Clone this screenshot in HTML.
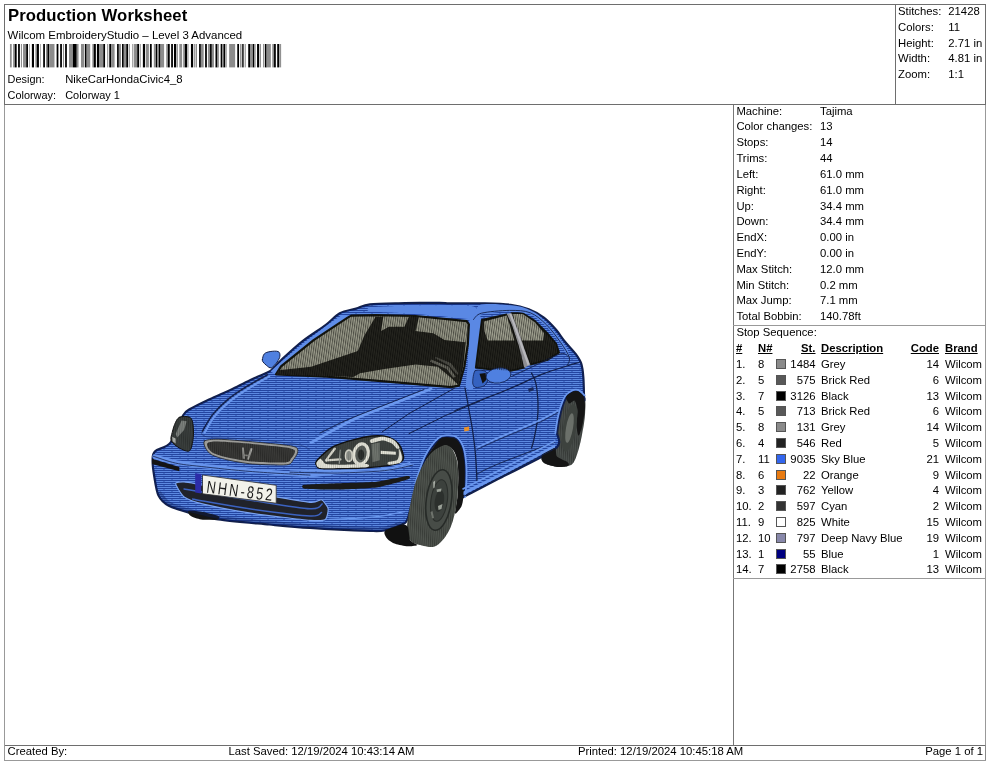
<!DOCTYPE html>
<html><head><meta charset="utf-8"><title>Production Worksheet</title>
<style>
html,body{margin:0;padding:0;background:#fff;}
body{width:990px;height:762px;position:relative;overflow:hidden;font-family:"Liberation Sans",sans-serif;color:#000;}
.t{position:absolute;white-space:nowrap;line-height:1;}
#tx{position:absolute;left:0;top:0;width:990px;height:762px;will-change:transform;}
.l{position:absolute;background:#6e6e6e;}
.sw{position:absolute;width:10px;height:10px;box-sizing:border-box;}
u{text-decoration:underline;text-decoration-thickness:1px;text-underline-offset:1px;}
</style></head><body>

<div class="l" style="left:4px;top:4px;width:982px;height:1px;background:#6e6e6e"></div>
<div class="l" style="left:4px;top:4px;width:1px;height:100px;background:#6e6e6e"></div>
<div class="l" style="left:895px;top:4px;width:1px;height:100px;background:#6e6e6e"></div>
<div class="l" style="left:985px;top:4px;width:1px;height:100px;background:#6e6e6e"></div>
<div class="l" style="left:4px;top:104px;width:982px;height:1px;background:#6e6e6e"></div>
<div class="l" style="left:4px;top:105px;width:1px;height:640px;background:#999"></div>
<div class="l" style="left:733px;top:105px;width:1px;height:640px;background:#777"></div>
<div class="l" style="left:985px;top:105px;width:1px;height:640px;background:#999"></div>
<div class="l" style="left:733px;top:325px;width:253px;height:1px;background:#999"></div>
<div class="l" style="left:733px;top:578px;width:253px;height:1px;background:#999"></div>
<div class="l" style="left:4px;top:745px;width:982px;height:1px;background:#6e6e6e"></div>
<div class="l" style="left:4px;top:760px;width:982px;height:1px;background:#999"></div>
<div class="l" style="left:4px;top:745px;width:1px;height:15px;background:#999"></div>
<div class="l" style="left:985px;top:745px;width:1px;height:15px;background:#888"></div>
<div id="tx">
<span class="t" style="left:8px;top:8.06px;font-size:16.7px;font-weight:bold;letter-spacing:0.08px;">Production Worksheet</span>
<span class="t" style="left:7.6px;top:29.61px;font-size:11.45px;">Wilcom EmbroideryStudio – Level 3 Advanced</span>
<span class="t" style="left:7.6px;top:74.17px;font-size:10.9px;">Design:</span>
<span class="t" style="left:65.2px;top:74.23px;font-size:11.3px;">NikeCarHondaCivic4_8</span>
<span class="t" style="left:7.6px;top:90.47px;font-size:10.9px;">Colorway:</span>
<span class="t" style="left:65.2px;top:90.43px;font-size:10.95px;">Colorway 1</span>
<svg style="position:absolute;left:0;top:44.2px" width="290" height="24" viewBox="0 0 290 24" shape-rendering="auto"><rect x="9.95" y="0" width="1.77" height="23.4" fill="#8c8c8c"/><rect x="13.13" y="0" width="1.77" height="23.4" fill="#8c8c8c"/><rect x="14.90" y="0" width="1.77" height="23.4" fill="#000"/><rect x="18.08" y="0" width="1.77" height="23.4" fill="#000"/><rect x="20.91" y="0" width="1.06" height="23.4" fill="#8c8c8c"/><rect x="23.03" y="0" width="3.18" height="23.4" fill="#8c8c8c"/><rect x="26.21" y="0" width="1.77" height="23.4" fill="#000"/><rect x="29.04" y="0" width="0.71" height="23.4" fill="#8c8c8c"/><rect x="31.87" y="0" width="2.12" height="23.4" fill="#000"/><rect x="35.40" y="0" width="1.41" height="23.4" fill="#8c8c8c"/><rect x="36.82" y="0" width="2.12" height="23.4" fill="#000"/><rect x="40.00" y="0" width="0.71" height="23.4" fill="#8c8c8c"/><rect x="43.18" y="0" width="1.77" height="23.4" fill="#000"/><rect x="46.01" y="0" width="1.41" height="23.4" fill="#8c8c8c"/><rect x="47.42" y="0" width="1.77" height="23.4" fill="#000"/><rect x="49.19" y="0" width="5.30" height="23.4" fill="#8c8c8c"/><rect x="56.62" y="0" width="1.77" height="23.4" fill="#000"/><rect x="60.15" y="0" width="1.77" height="23.4" fill="#000"/><rect x="62.98" y="0" width="1.06" height="23.4" fill="#8c8c8c"/><rect x="65.10" y="0" width="1.77" height="23.4" fill="#000"/><rect x="68.99" y="0" width="3.89" height="23.4" fill="#8c8c8c"/><rect x="72.88" y="0" width="2.12" height="23.4" fill="#000"/><rect x="75.00" y="0" width="1.77" height="23.4" fill="#000"/><rect x="76.77" y="0" width="1.77" height="23.4" fill="#8c8c8c"/><rect x="81.01" y="0" width="3.18" height="23.4" fill="#8c8c8c"/><rect x="84.90" y="0" width="1.77" height="23.4" fill="#000"/><rect x="86.67" y="0" width="3.54" height="23.4" fill="#8c8c8c"/><rect x="92.32" y="0" width="1.41" height="23.4" fill="#8c8c8c"/><rect x="93.74" y="0" width="2.12" height="23.4" fill="#000"/><rect x="96.92" y="0" width="2.12" height="23.4" fill="#000"/><rect x="99.04" y="0" width="4.24" height="23.4" fill="#8c8c8c"/><rect x="103.28" y="0" width="1.77" height="23.4" fill="#000"/><rect x="107.17" y="0" width="1.06" height="23.4" fill="#8c8c8c"/><rect x="109.29" y="0" width="1.77" height="23.4" fill="#000"/><rect x="111.06" y="0" width="3.54" height="23.4" fill="#8c8c8c"/><rect x="117.07" y="0" width="1.77" height="23.4" fill="#000"/><rect x="118.84" y="0" width="2.12" height="23.4" fill="#8c8c8c"/><rect x="122.02" y="0" width="1.77" height="23.4" fill="#000"/><rect x="123.79" y="0" width="2.47" height="23.4" fill="#8c8c8c"/><rect x="126.26" y="0" width="1.77" height="23.4" fill="#000"/><rect x="128.74" y="0" width="1.06" height="23.4" fill="#8c8c8c"/><rect x="132.27" y="0" width="1.06" height="23.4" fill="#8c8c8c"/><rect x="134.04" y="0" width="3.18" height="23.4" fill="#8c8c8c"/><rect x="137.22" y="0" width="1.77" height="23.4" fill="#000"/><rect x="139.70" y="0" width="1.06" height="23.4" fill="#8c8c8c"/><rect x="142.88" y="0" width="2.12" height="23.4" fill="#000"/><rect x="145.71" y="0" width="3.18" height="23.4" fill="#8c8c8c"/><rect x="149.95" y="0" width="1.77" height="23.4" fill="#000"/><rect x="153.84" y="0" width="2.12" height="23.4" fill="#8c8c8c"/><rect x="155.96" y="0" width="1.41" height="23.4" fill="#000"/><rect x="157.37" y="0" width="1.41" height="23.4" fill="#8c8c8c"/><rect x="158.79" y="0" width="1.77" height="23.4" fill="#000"/><rect x="160.56" y="0" width="3.54" height="23.4" fill="#8c8c8c"/><rect x="166.21" y="0" width="1.77" height="23.4" fill="#8c8c8c"/><rect x="167.98" y="0" width="1.77" height="23.4" fill="#000"/><rect x="171.16" y="0" width="1.77" height="23.4" fill="#000"/><rect x="173.99" y="0" width="2.12" height="23.4" fill="#000"/><rect x="176.46" y="0" width="1.41" height="23.4" fill="#8c8c8c"/><rect x="179.29" y="0" width="2.83" height="23.4" fill="#8c8c8c"/><rect x="183.18" y="0" width="1.77" height="23.4" fill="#8c8c8c"/><rect x="184.95" y="0" width="2.12" height="23.4" fill="#000"/><rect x="187.42" y="0" width="1.06" height="23.4" fill="#8c8c8c"/><rect x="190.96" y="0" width="2.12" height="23.4" fill="#000"/><rect x="193.79" y="0" width="1.06" height="23.4" fill="#8c8c8c"/><rect x="195.56" y="0" width="1.41" height="23.4" fill="#8c8c8c"/><rect x="199.09" y="0" width="1.77" height="23.4" fill="#000"/><rect x="200.86" y="0" width="2.83" height="23.4" fill="#8c8c8c"/><rect x="205.10" y="0" width="1.77" height="23.4" fill="#000"/><rect x="207.93" y="0" width="2.12" height="23.4" fill="#8c8c8c"/><rect x="210.05" y="0" width="1.77" height="23.4" fill="#000"/><rect x="211.82" y="0" width="2.12" height="23.4" fill="#8c8c8c"/><rect x="215.00" y="0" width="0.71" height="23.4" fill="#8c8c8c"/><rect x="215.71" y="0" width="1.77" height="23.4" fill="#000"/><rect x="217.47" y="0" width="1.41" height="23.4" fill="#8c8c8c"/><rect x="220.66" y="0" width="1.41" height="23.4" fill="#000"/><rect x="222.07" y="0" width="1.41" height="23.4" fill="#8c8c8c"/><rect x="223.48" y="0" width="1.77" height="23.4" fill="#000"/><rect x="225.61" y="0" width="1.06" height="23.4" fill="#8c8c8c"/><rect x="229.14" y="0" width="6.01" height="23.4" fill="#8c8c8c"/><rect x="237.27" y="0" width="1.77" height="23.4" fill="#000"/><rect x="240.10" y="0" width="1.41" height="23.4" fill="#8c8c8c"/><rect x="242.22" y="0" width="1.41" height="23.4" fill="#000"/><rect x="244.70" y="0" width="1.06" height="23.4" fill="#8c8c8c"/><rect x="248.23" y="0" width="1.77" height="23.4" fill="#000"/><rect x="250.00" y="0" width="2.83" height="23.4" fill="#8c8c8c"/><rect x="252.83" y="0" width="1.41" height="23.4" fill="#000"/><rect x="254.24" y="0" width="1.41" height="23.4" fill="#8c8c8c"/><rect x="257.07" y="0" width="2.12" height="23.4" fill="#000"/><rect x="259.90" y="0" width="1.06" height="23.4" fill="#8c8c8c"/><rect x="263.08" y="0" width="1.06" height="23.4" fill="#8c8c8c"/><rect x="264.85" y="0" width="1.77" height="23.4" fill="#000"/><rect x="266.62" y="0" width="4.24" height="23.4" fill="#8c8c8c"/><rect x="272.27" y="0" width="1.77" height="23.4" fill="#8c8c8c"/><rect x="274.04" y="0" width="1.77" height="23.4" fill="#000"/><rect x="277.22" y="0" width="2.12" height="23.4" fill="#000"/><rect x="280.05" y="0" width="1.06" height="23.4" fill="#8c8c8c"/></svg>
<span class="t" style="left:898px;top:5.83px;font-size:11.3px;">Stitches:</span>
<span class="t" style="left:948.3px;top:5.83px;font-size:11.3px;">21428</span>
<span class="t" style="left:898px;top:21.68px;font-size:11.3px;">Colors:</span>
<span class="t" style="left:948.3px;top:21.68px;font-size:11.3px;">11</span>
<span class="t" style="left:898px;top:37.53px;font-size:11.3px;">Height:</span>
<span class="t" style="left:948.3px;top:37.53px;font-size:11.3px;">2.71 in</span>
<span class="t" style="left:898px;top:53.38px;font-size:11.3px;">Width:</span>
<span class="t" style="left:948.3px;top:53.38px;font-size:11.3px;">4.81 in</span>
<span class="t" style="left:898px;top:69.23px;font-size:11.3px;">Zoom:</span>
<span class="t" style="left:948.3px;top:69.23px;font-size:11.3px;">1:1</span>
<span class="t" style="left:736.4px;top:105.63px;font-size:11.3px;">Machine:</span>
<span class="t" style="left:820px;top:105.63px;font-size:11.3px;">Tajima</span>
<span class="t" style="left:736.4px;top:121.45px;font-size:11.3px;">Color changes:</span>
<span class="t" style="left:820px;top:121.45px;font-size:11.3px;">13</span>
<span class="t" style="left:736.4px;top:137.27px;font-size:11.3px;">Stops:</span>
<span class="t" style="left:820px;top:137.27px;font-size:11.3px;">14</span>
<span class="t" style="left:736.4px;top:153.09px;font-size:11.3px;">Trims:</span>
<span class="t" style="left:820px;top:153.09px;font-size:11.3px;">44</span>
<span class="t" style="left:736.4px;top:168.91px;font-size:11.3px;">Left:</span>
<span class="t" style="left:820px;top:168.91px;font-size:11.3px;">61.0 mm</span>
<span class="t" style="left:736.4px;top:184.73px;font-size:11.3px;">Right:</span>
<span class="t" style="left:820px;top:184.73px;font-size:11.3px;">61.0 mm</span>
<span class="t" style="left:736.4px;top:200.55px;font-size:11.3px;">Up:</span>
<span class="t" style="left:820px;top:200.55px;font-size:11.3px;">34.4 mm</span>
<span class="t" style="left:736.4px;top:216.37px;font-size:11.3px;">Down:</span>
<span class="t" style="left:820px;top:216.37px;font-size:11.3px;">34.4 mm</span>
<span class="t" style="left:736.4px;top:232.19px;font-size:11.3px;">EndX:</span>
<span class="t" style="left:820px;top:232.19px;font-size:11.3px;">0.00 in</span>
<span class="t" style="left:736.4px;top:248.01px;font-size:11.3px;">EndY:</span>
<span class="t" style="left:820px;top:248.01px;font-size:11.3px;">0.00 in</span>
<span class="t" style="left:736.4px;top:263.83px;font-size:11.3px;">Max Stitch:</span>
<span class="t" style="left:820px;top:263.83px;font-size:11.3px;">12.0 mm</span>
<span class="t" style="left:736.4px;top:279.65px;font-size:11.3px;">Min Stitch:</span>
<span class="t" style="left:820px;top:279.65px;font-size:11.3px;">0.2 mm</span>
<span class="t" style="left:736.4px;top:295.47px;font-size:11.3px;">Max Jump:</span>
<span class="t" style="left:820px;top:295.47px;font-size:11.3px;">7.1 mm</span>
<span class="t" style="left:736.4px;top:311.29px;font-size:11.3px;">Total Bobbin:</span>
<span class="t" style="left:820px;top:311.29px;font-size:11.3px;">140.78ft</span>
<span class="t" style="left:736.4px;top:327.33px;font-size:11.3px;">Stop Sequence:</span>
<span class="t" style="left:736px;top:343.43px;font-size:11.3px;font-weight:bold;"><u>#</u></span>
<span class="t" style="left:758px;top:343.43px;font-size:11.3px;font-weight:bold;"><u>N#</u></span>
<span class="t" style="right:174.5px;top:343.43px;font-size:11.3px;font-weight:bold;"><u>St.</u></span>
<span class="t" style="left:821px;top:343.43px;font-size:11.3px;font-weight:bold;"><u>Description</u></span>
<span class="t" style="right:51px;top:343.43px;font-size:11.3px;font-weight:bold;"><u>Code</u></span>
<span class="t" style="left:945px;top:343.43px;font-size:11.3px;font-weight:bold;"><u>Brand</u></span>
<span class="t" style="left:736px;top:359.03px;font-size:11.3px;">1.</span>
<span class="t" style="left:758px;top:359.03px;font-size:11.3px;">8</span>
<div class="sw" style="left:776px;top:358.90px;background:#8a8a8a;border:1px solid #555"></div>
<span class="t" style="right:174.5px;top:359.03px;font-size:11.3px;">1484</span>
<span class="t" style="left:821px;top:359.03px;font-size:11.3px;">Grey</span>
<span class="t" style="right:51px;top:359.03px;font-size:11.3px;">14</span>
<span class="t" style="left:945px;top:359.03px;font-size:11.3px;">Wilcom</span>
<span class="t" style="left:736px;top:374.83px;font-size:11.3px;">2.</span>
<span class="t" style="left:758px;top:374.83px;font-size:11.3px;">5</span>
<div class="sw" style="left:776px;top:374.70px;background:#585858;border:1px solid #555"></div>
<span class="t" style="right:174.5px;top:374.83px;font-size:11.3px;">575</span>
<span class="t" style="left:821px;top:374.83px;font-size:11.3px;">Brick Red</span>
<span class="t" style="right:51px;top:374.83px;font-size:11.3px;">6</span>
<span class="t" style="left:945px;top:374.83px;font-size:11.3px;">Wilcom</span>
<span class="t" style="left:736px;top:390.63px;font-size:11.3px;">3.</span>
<span class="t" style="left:758px;top:390.63px;font-size:11.3px;">7</span>
<div class="sw" style="left:776px;top:390.50px;background:#000;border:1px solid #555"></div>
<span class="t" style="right:174.5px;top:390.63px;font-size:11.3px;">3126</span>
<span class="t" style="left:821px;top:390.63px;font-size:11.3px;">Black</span>
<span class="t" style="right:51px;top:390.63px;font-size:11.3px;">13</span>
<span class="t" style="left:945px;top:390.63px;font-size:11.3px;">Wilcom</span>
<span class="t" style="left:736px;top:406.43px;font-size:11.3px;">4.</span>
<span class="t" style="left:758px;top:406.43px;font-size:11.3px;">5</span>
<div class="sw" style="left:776px;top:406.30px;background:#585858;border:1px solid #555"></div>
<span class="t" style="right:174.5px;top:406.43px;font-size:11.3px;">713</span>
<span class="t" style="left:821px;top:406.43px;font-size:11.3px;">Brick Red</span>
<span class="t" style="right:51px;top:406.43px;font-size:11.3px;">6</span>
<span class="t" style="left:945px;top:406.43px;font-size:11.3px;">Wilcom</span>
<span class="t" style="left:736px;top:422.23px;font-size:11.3px;">5.</span>
<span class="t" style="left:758px;top:422.23px;font-size:11.3px;">8</span>
<div class="sw" style="left:776px;top:422.10px;background:#8a8a8a;border:1px solid #555"></div>
<span class="t" style="right:174.5px;top:422.23px;font-size:11.3px;">131</span>
<span class="t" style="left:821px;top:422.23px;font-size:11.3px;">Grey</span>
<span class="t" style="right:51px;top:422.23px;font-size:11.3px;">14</span>
<span class="t" style="left:945px;top:422.23px;font-size:11.3px;">Wilcom</span>
<span class="t" style="left:736px;top:438.03px;font-size:11.3px;">6.</span>
<span class="t" style="left:758px;top:438.03px;font-size:11.3px;">4</span>
<div class="sw" style="left:776px;top:437.90px;background:#222;border:1px solid #555"></div>
<span class="t" style="right:174.5px;top:438.03px;font-size:11.3px;">546</span>
<span class="t" style="left:821px;top:438.03px;font-size:11.3px;">Red</span>
<span class="t" style="right:51px;top:438.03px;font-size:11.3px;">5</span>
<span class="t" style="left:945px;top:438.03px;font-size:11.3px;">Wilcom</span>
<span class="t" style="left:736px;top:453.83px;font-size:11.3px;">7.</span>
<span class="t" style="left:758px;top:453.83px;font-size:11.3px;">11</span>
<div class="sw" style="left:776px;top:453.70px;background:#3366ee;border:1px solid #555"></div>
<span class="t" style="right:174.5px;top:453.83px;font-size:11.3px;">9035</span>
<span class="t" style="left:821px;top:453.83px;font-size:11.3px;">Sky Blue</span>
<span class="t" style="right:51px;top:453.83px;font-size:11.3px;">21</span>
<span class="t" style="left:945px;top:453.83px;font-size:11.3px;">Wilcom</span>
<span class="t" style="left:736px;top:469.63px;font-size:11.3px;">8.</span>
<span class="t" style="left:758px;top:469.63px;font-size:11.3px;">6</span>
<div class="sw" style="left:776px;top:469.50px;background:#e87a10;border:1px solid #555"></div>
<span class="t" style="right:174.5px;top:469.63px;font-size:11.3px;">22</span>
<span class="t" style="left:821px;top:469.63px;font-size:11.3px;">Orange</span>
<span class="t" style="right:51px;top:469.63px;font-size:11.3px;">9</span>
<span class="t" style="left:945px;top:469.63px;font-size:11.3px;">Wilcom</span>
<span class="t" style="left:736px;top:485.43px;font-size:11.3px;">9.</span>
<span class="t" style="left:758px;top:485.43px;font-size:11.3px;">3</span>
<div class="sw" style="left:776px;top:485.30px;background:#222;border:1px solid #555"></div>
<span class="t" style="right:174.5px;top:485.43px;font-size:11.3px;">762</span>
<span class="t" style="left:821px;top:485.43px;font-size:11.3px;">Yellow</span>
<span class="t" style="right:51px;top:485.43px;font-size:11.3px;">4</span>
<span class="t" style="left:945px;top:485.43px;font-size:11.3px;">Wilcom</span>
<span class="t" style="left:736px;top:501.23px;font-size:11.3px;">10.</span>
<span class="t" style="left:758px;top:501.23px;font-size:11.3px;">2</span>
<div class="sw" style="left:776px;top:501.10px;background:#333;border:1px solid #555"></div>
<span class="t" style="right:174.5px;top:501.23px;font-size:11.3px;">597</span>
<span class="t" style="left:821px;top:501.23px;font-size:11.3px;">Cyan</span>
<span class="t" style="right:51px;top:501.23px;font-size:11.3px;">2</span>
<span class="t" style="left:945px;top:501.23px;font-size:11.3px;">Wilcom</span>
<span class="t" style="left:736px;top:517.03px;font-size:11.3px;">11.</span>
<span class="t" style="left:758px;top:517.03px;font-size:11.3px;">9</span>
<div class="sw" style="left:776px;top:516.90px;background:#fff;border:1px solid #555"></div>
<span class="t" style="right:174.5px;top:517.03px;font-size:11.3px;">825</span>
<span class="t" style="left:821px;top:517.03px;font-size:11.3px;">White</span>
<span class="t" style="right:51px;top:517.03px;font-size:11.3px;">15</span>
<span class="t" style="left:945px;top:517.03px;font-size:11.3px;">Wilcom</span>
<span class="t" style="left:736px;top:532.83px;font-size:11.3px;">12.</span>
<span class="t" style="left:758px;top:532.83px;font-size:11.3px;">10</span>
<div class="sw" style="left:776px;top:532.70px;background:#8888aa;border:1px solid #555"></div>
<span class="t" style="right:174.5px;top:532.83px;font-size:11.3px;">797</span>
<span class="t" style="left:821px;top:532.83px;font-size:11.3px;">Deep Navy Blue</span>
<span class="t" style="right:51px;top:532.83px;font-size:11.3px;">19</span>
<span class="t" style="left:945px;top:532.83px;font-size:11.3px;">Wilcom</span>
<span class="t" style="left:736px;top:548.63px;font-size:11.3px;">13.</span>
<span class="t" style="left:758px;top:548.63px;font-size:11.3px;">1</span>
<div class="sw" style="left:776px;top:548.50px;background:#000080;border:1px solid #555"></div>
<span class="t" style="right:174.5px;top:548.63px;font-size:11.3px;">55</span>
<span class="t" style="left:821px;top:548.63px;font-size:11.3px;">Blue</span>
<span class="t" style="right:51px;top:548.63px;font-size:11.3px;">1</span>
<span class="t" style="left:945px;top:548.63px;font-size:11.3px;">Wilcom</span>
<span class="t" style="left:736px;top:564.43px;font-size:11.3px;">14.</span>
<span class="t" style="left:758px;top:564.43px;font-size:11.3px;">7</span>
<div class="sw" style="left:776px;top:564.30px;background:#000;border:1px solid #555"></div>
<span class="t" style="right:174.5px;top:564.43px;font-size:11.3px;">2758</span>
<span class="t" style="left:821px;top:564.43px;font-size:11.3px;">Black</span>
<span class="t" style="right:51px;top:564.43px;font-size:11.3px;">13</span>
<span class="t" style="left:945px;top:564.43px;font-size:11.3px;">Wilcom</span>
<span class="t" style="left:7.6px;top:745.93px;font-size:11.3px;">Created By:</span>
<span class="t" style="left:228.5px;top:745.93px;font-size:11.3px;">Last Saved: 12/19/2024 10:43:14 AM</span>
<span class="t" style="left:578px;top:745.93px;font-size:11.3px;">Printed: 12/19/2024 10:45:18 AM</span>
<span class="t" style="right:7px;top:745.93px;font-size:11.3px;">Page 1 of 1</span>
</div>
<svg style="position:absolute;left:0;top:0" width="990" height="762" viewBox="0 0 990 762">
<defs>
<pattern id="hs" width="16" height="4" patternUnits="userSpaceOnUse">
<rect x="0" y="0" width="16" height="1" fill="#001a78" opacity="0.61"/>
<rect x="0" y="2" width="16" height="1" fill="#001a78" opacity="0.61"/>
<rect x="3" y="1" width="2" height="1" fill="#001a78" opacity="0.25"/>
<rect x="11" y="3" width="2" height="1" fill="#001a78" opacity="0.25"/>
</pattern>
<pattern id="vs" width="2.2" height="40" patternUnits="userSpaceOnUse" patternTransform="rotate(8)">
<rect x="0" y="0" width="1.0" height="40" fill="#000" opacity="0.50"/>
</pattern>
<pattern id="vt" width="2.1" height="40" patternUnits="userSpaceOnUse" patternTransform="rotate(3)">
<rect x="0" y="0" width="0.9" height="40" fill="#000" opacity="0.28"/>
</pattern>
<clipPath id="cb"><path d="M339.8,313.2 C335.3,315.7 331.4,320.7 325.9,324.9 C320.3,329.0 308.9,336.2 302.6,341.1 C296.4,346.0 288.6,353.2 284.1,357.4 C279.5,361.6 274.7,366.8 272.4,369.0 C270.2,371.2 272.1,370.2 268.9,371.8 C265.8,373.4 256.9,376.9 251.5,379.5 C246.1,382.0 239.2,385.8 232.9,388.7 C226.7,391.7 216.0,396.2 209.7,399.2 C203.4,402.2 195.1,406.1 191.1,408.5 C187.1,410.9 186.1,410.3 183.0,415.5 C179.9,420.6 174.6,437.3 170.5,442.6 C166.3,448.0 157.8,448.6 155.1,451.2 C152.4,453.7 152.7,455.9 152.6,459.7 C152.4,463.5 153.4,471.4 154.3,476.8 C155.2,482.1 156.4,491.2 158.5,495.5 C160.7,499.9 164.2,503.2 168.8,505.8 C173.4,508.3 181.8,510.5 189.2,512.6 C196.7,514.6 206.2,517.6 218.2,519.4 C230.3,521.2 255.6,523.2 269.4,524.5 C283.2,525.8 294.9,527.0 310.0,527.9 C325.1,528.9 358.8,530.5 370.0,530.9 C381.2,531.2 380.2,531.3 385.0,530.4 C389.7,529.4 398.1,526.4 401.5,524.6 C404.9,522.7 405.5,524.6 407.8,518.3 C410.2,511.9 414.4,491.2 417.3,482.0 C420.1,472.8 423.4,463.2 426.7,456.8 C430.0,450.4 436.0,442.4 439.3,439.5 C442.7,436.5 446.2,437.1 448.8,437.1 C451.4,437.1 454.7,437.7 456.7,439.5 C458.7,441.2 461.0,445.1 462.2,448.9 C463.4,452.7 464.2,459.5 464.6,464.7 C464.9,469.9 464.8,478.9 464.6,483.6 C464.4,488.3 463.5,494.2 463.3,496.2 C463.1,498.2 458.0,499.7 463.5,497.0 C469.0,494.3 486.3,485.2 500.0,478.0 C513.7,470.8 546.5,455.9 555.0,449.0 C563.5,442.1 556.4,436.5 557.0,432.0 C557.6,427.6 558.4,422.7 559.2,419.1 C559.9,415.4 561.0,410.8 562.0,407.5 C563.1,404.3 564.9,399.7 566.4,397.4 C567.9,395.1 570.4,393.2 572.2,392.4 C573.9,391.5 576.1,390.9 577.9,391.6 C579.7,392.4 583.2,396.2 584.1,397.4 C585.1,398.6 584.2,402.6 584.1,399.5 C584.0,396.5 583.8,382.3 583.3,376.8 C582.9,371.4 582.2,366.6 581.1,363.2 C579.9,359.8 578.1,357.3 575.8,354.1 C573.4,350.9 568.1,345.6 565.2,342.0 C562.2,338.3 559.2,333.5 556.1,329.8 C552.9,326.2 548.0,320.8 543.9,317.7 C539.8,314.7 533.8,311.3 528.8,309.4 C523.8,307.5 517.9,305.8 510.6,304.8 C503.3,303.9 489.4,303.6 480.3,303.3 C471.2,303.1 456.1,303.4 450.0,303.3 C443.9,303.3 446.5,302.8 439.7,302.8 C432.9,302.8 415.3,303.0 404.9,303.2 C394.4,303.5 377.3,303.6 370.0,304.4 C362.7,305.2 360.6,307.3 356.1,308.6 C351.6,309.9 344.3,310.8 339.8,313.2Z"/></clipPath>
</defs>
<path d="M584.4,398.1 C586.1,401.7 585.4,407.6 585.1,413.3 C584.8,418.9 583.7,425.8 582.5,432.0 C581.4,438.3 579.7,445.8 578.2,450.8 C576.7,455.9 575.3,459.8 573.6,462.4 C571.9,464.9 570.5,465.2 567.8,466.0 C565.2,466.7 561.3,467.3 557.7,467.0 C554.1,466.7 548.9,465.3 546.2,464.1 C543.5,462.8 542.0,461.7 541.6,459.5 C541.1,457.3 541.1,453.2 543.3,450.8 C545.5,448.4 552.2,450.3 554.8,445.0 C557.5,439.7 557.2,427.0 559.2,419.1 C561.1,411.1 563.7,402.0 566.4,397.4 C569.0,392.8 572.0,391.5 575.0,391.6 C578.0,391.8 582.7,394.5 584.4,398.1Z" fill="#4a4f4c" stroke="none" stroke-width="1" stroke-linejoin="round" stroke-linecap="round" />
<path d="M584.4,398.1 C586.1,401.7 585.4,407.6 585.1,413.3 C584.8,418.9 583.7,425.8 582.5,432.0 C581.4,438.3 579.7,445.8 578.2,450.8 C576.7,455.9 575.3,459.8 573.6,462.4 C571.9,464.9 570.5,465.2 567.8,466.0 C565.2,466.7 561.3,467.3 557.7,467.0 C554.1,466.7 548.9,465.3 546.2,464.1 C543.5,462.8 542.0,461.7 541.6,459.5 C541.1,457.3 541.1,453.2 543.3,450.8 C545.5,448.4 552.2,450.3 554.8,445.0 C557.5,439.7 557.2,427.0 559.2,419.1 C561.1,411.1 563.7,402.0 566.4,397.4 C569.0,392.8 572.0,391.5 575.0,391.6 C578.0,391.8 582.7,394.5 584.4,398.1Z" fill="url(#vt)"/>
<path d="M339.8,313.2 C335.3,315.7 331.4,320.7 325.9,324.9 C320.3,329.0 308.9,336.2 302.6,341.1 C296.4,346.0 288.6,353.2 284.1,357.4 C279.5,361.6 274.7,366.8 272.4,369.0 C270.2,371.2 272.1,370.2 268.9,371.8 C265.8,373.4 256.9,376.9 251.5,379.5 C246.1,382.0 239.2,385.8 232.9,388.7 C226.7,391.7 216.0,396.2 209.7,399.2 C203.4,402.2 195.1,406.1 191.1,408.5 C187.1,410.9 186.1,410.3 183.0,415.5 C179.9,420.6 174.6,437.3 170.5,442.6 C166.3,448.0 157.8,448.6 155.1,451.2 C152.4,453.7 152.7,455.9 152.6,459.7 C152.4,463.5 153.4,471.4 154.3,476.8 C155.2,482.1 156.4,491.2 158.5,495.5 C160.7,499.9 164.2,503.2 168.8,505.8 C173.4,508.3 181.8,510.5 189.2,512.6 C196.7,514.6 206.2,517.6 218.2,519.4 C230.3,521.2 255.6,523.2 269.4,524.5 C283.2,525.8 294.9,527.0 310.0,527.9 C325.1,528.9 358.8,530.5 370.0,530.9 C381.2,531.2 380.2,531.3 385.0,530.4 C389.7,529.4 398.1,526.4 401.5,524.6 C404.9,522.7 405.5,524.6 407.8,518.3 C410.2,511.9 414.4,491.2 417.3,482.0 C420.1,472.8 423.4,463.2 426.7,456.8 C430.0,450.4 436.0,442.4 439.3,439.5 C442.7,436.5 446.2,437.1 448.8,437.1 C451.4,437.1 454.7,437.7 456.7,439.5 C458.7,441.2 461.0,445.1 462.2,448.9 C463.4,452.7 464.2,459.5 464.6,464.7 C464.9,469.9 464.8,478.9 464.6,483.6 C464.4,488.3 463.5,494.2 463.3,496.2 C463.1,498.2 458.0,499.7 463.5,497.0 C469.0,494.3 486.3,485.2 500.0,478.0 C513.7,470.8 546.5,455.9 555.0,449.0 C563.5,442.1 556.4,436.5 557.0,432.0 C557.6,427.6 558.4,422.7 559.2,419.1 C559.9,415.4 561.0,410.8 562.0,407.5 C563.1,404.3 564.9,399.7 566.4,397.4 C567.9,395.1 570.4,393.2 572.2,392.4 C573.9,391.5 576.1,390.9 577.9,391.6 C579.7,392.4 583.2,396.2 584.1,397.4 C585.1,398.6 584.2,402.6 584.1,399.5 C584.0,396.5 583.8,382.3 583.3,376.8 C582.9,371.4 582.2,366.6 581.1,363.2 C579.9,359.8 578.1,357.3 575.8,354.1 C573.4,350.9 568.1,345.6 565.2,342.0 C562.2,338.3 559.2,333.5 556.1,329.8 C552.9,326.2 548.0,320.8 543.9,317.7 C539.8,314.7 533.8,311.3 528.8,309.4 C523.8,307.5 517.9,305.8 510.6,304.8 C503.3,303.9 489.4,303.6 480.3,303.3 C471.2,303.1 456.1,303.4 450.0,303.3 C443.9,303.3 446.5,302.8 439.7,302.8 C432.9,302.8 415.3,303.0 404.9,303.2 C394.4,303.5 377.3,303.6 370.0,304.4 C362.7,305.2 360.6,307.3 356.1,308.6 C351.6,309.9 344.3,310.8 339.8,313.2Z" fill="#5c89e1" stroke="#13204a" stroke-width="2.2" stroke-linejoin="round" stroke-linecap="round" />
<rect x="140" y="290" width="460" height="260" fill="url(#hs)" clip-path="url(#cb)"/>
<path d="M415.4,482.8 C417.0,478.3 421.3,463.2 425.2,455.7 C429.0,448.2 434.6,441.3 438.6,437.9 C442.5,434.5 445.6,435.4 448.8,435.4 C452.0,435.4 455.2,435.8 457.6,437.9 C460.1,440.0 462.2,443.7 463.6,448.1 C465.1,452.6 465.8,458.8 466.3,464.7 C466.7,470.6 466.5,478.2 466.3,483.6 C466.1,489.0 465.2,494.7 465.0,497.0" fill="none" stroke="#6a97ee" stroke-width="1.8" stroke-linejoin="round" stroke-linecap="round" />
<path d="M555.3,433.5 C555.7,431.0 556.7,423.1 557.6,418.6 C558.5,414.2 559.4,410.5 560.6,406.8 C561.9,403.1 563.2,398.9 565.1,396.3 C566.9,393.6 569.5,391.8 571.7,390.8 C573.9,389.7 576.2,389.3 578.4,390.1 C580.5,390.8 583.5,394.5 584.6,395.4" fill="none" stroke="#6a97ee" stroke-width="1.8" stroke-linejoin="round" stroke-linecap="round" />
<path d="M425.2,459.9 C425.6,458.5 436.2,442.8 439.3,439.8 C442.5,436.8 446.5,437.4 448.8,437.4 C451.1,437.4 454.9,438.2 456.7,439.8 C458.5,441.3 461.1,445.6 462.2,448.9 C463.2,452.2 464.2,460.0 464.6,464.7 C464.9,469.3 464.7,479.2 464.6,483.6 C464.4,488.0 463.7,494.7 463.3,497.8 C462.9,500.8 462.5,504.3 461.4,506.4 C460.3,508.5 455.6,514.9 455.1,513.5 C454.6,512.2 457.1,501.0 457.5,496.2 C457.9,491.4 458.3,481.9 458.3,477.3 C458.3,472.7 458.1,465.1 457.5,461.5 C456.8,457.9 455.1,452.6 453.5,450.5 C452.0,448.4 448.0,445.8 445.7,445.8 C443.3,445.8 438.9,448.6 436.2,450.5 C433.5,452.4 424.7,461.4 425.2,459.9Z" fill="#141414" stroke="none" stroke-width="1" stroke-linejoin="round" stroke-linecap="round" />
<path d="M443.3,445.4 C440.5,446.4 435.7,448.7 432.3,452.1 C428.8,455.4 425.6,460.5 422.8,465.5 C420.0,470.5 417.7,476.1 415.7,482.0 C413.7,487.9 412.3,494.9 411.0,500.9 C409.7,507.0 408.5,513.3 407.8,518.3 C407.2,523.2 406.6,527.2 407.0,530.9 C407.4,534.5 408.5,538.1 410.2,540.3 C411.9,542.6 413.5,543.2 417.3,544.3 C421.1,545.4 428.8,547.6 433.0,546.9 C437.2,546.3 439.6,543.5 442.5,540.3 C445.4,537.1 448.3,532.4 450.4,527.7 C452.5,523.0 453.9,517.2 455.1,512.0 C456.3,506.7 456.9,502.0 457.5,496.2 C458.0,490.4 458.3,483.1 458.3,477.3 C458.2,471.5 458.0,466.0 457.2,461.5 C456.3,457.1 454.6,453.1 453.2,450.5 C451.8,447.9 450.5,446.9 448.8,446.1 C447.1,445.2 446.0,444.4 443.3,445.4Z" fill="#4f544e" stroke="none" stroke-width="1" stroke-linejoin="round" stroke-linecap="round" />
<path d="M443.3,445.4 C440.5,446.4 435.7,448.7 432.3,452.1 C428.8,455.4 425.6,460.5 422.8,465.5 C420.0,470.5 417.7,476.1 415.7,482.0 C413.7,487.9 412.3,494.9 411.0,500.9 C409.7,507.0 408.5,513.3 407.8,518.3 C407.2,523.2 406.6,527.2 407.0,530.9 C407.4,534.5 408.5,538.1 410.2,540.3 C411.9,542.6 413.5,543.2 417.3,544.3 C421.1,545.4 428.8,547.6 433.0,546.9 C437.2,546.3 439.6,543.5 442.5,540.3 C445.4,537.1 448.3,532.4 450.4,527.7 C452.5,523.0 453.9,517.2 455.1,512.0 C456.3,506.7 456.9,502.0 457.5,496.2 C458.0,490.4 458.3,483.1 458.3,477.3 C458.2,471.5 458.0,466.0 457.2,461.5 C456.3,457.1 454.6,453.1 453.2,450.5 C451.8,447.9 450.5,446.9 448.8,446.1 C447.1,445.2 446.0,444.4 443.3,445.4Z" fill="url(#vt)"/>
<path d="M385.0,530.9 C386.9,529.0 398.5,525.1 401.5,524.6 C404.6,524.0 406.7,524.8 407.8,526.9 C409.0,529.0 408.9,537.9 410.2,540.3 C411.4,542.7 417.6,544.3 417.3,545.1 C417.0,545.8 410.8,546.5 407.8,546.3 C404.9,546.1 397.9,544.8 395.2,543.8 C392.5,542.8 388.7,540.5 387.3,538.7 C386.0,537.0 383.1,532.8 385.0,530.9Z" fill="#111" stroke="none" stroke-width="1" stroke-linejoin="round" stroke-linecap="round" />
<g transform="rotate(8 438.9 500)"><ellipse cx="438.9" cy="500" rx="12.6" ry="30.5" fill="#474c47" stroke="#272b28" stroke-width="1.6"/><ellipse cx="439.2" cy="500.5" rx="8.2" ry="21" fill="#3c413d" stroke="#2a2e2b" stroke-width="1"/><ellipse cx="439.5" cy="501" rx="4.6" ry="11" fill="#2c302d"/></g>
<path d="M433.2,482.0 L435.2,480.5 L434.6,487.5 L433.4,488.5Z" fill="#a9aea6" stroke="none" stroke-width="1" stroke-linejoin="round" stroke-linecap="round" />
<path d="M436.5,489.5 L441.5,488.5 L441.0,491.5 L437.0,492.0Z" fill="#9aa097" stroke="none" stroke-width="1" stroke-linejoin="round" stroke-linecap="round" />
<path d="M438.0,506.0 L442.5,504.0 L441.5,509.0 L438.5,510.0Z" fill="#9aa097" stroke="none" stroke-width="1" stroke-linejoin="round" stroke-linecap="round" />
<path d="M430.5,512.0 L432.5,511.0 L434.0,518.0 L432.0,518.5Z" fill="#6e736c" stroke="none" stroke-width="1" stroke-linejoin="round" stroke-linecap="round" />
<path d="M566.1,396.7 C566.5,395.2 570.6,392.7 572.2,391.9 C573.7,391.2 576.4,390.6 577.9,391.2 C579.5,391.8 582.8,394.5 583.7,396.7 C584.6,398.9 585.1,404.1 585.0,407.8 C584.8,411.6 583.4,421.1 582.5,424.8 C581.7,428.5 579.5,435.7 578.6,435.7 C577.8,435.7 576.6,428.1 576.5,424.8 C576.3,421.6 577.9,414.3 577.6,411.1 C577.4,407.9 575.9,401.8 574.7,400.7 C573.6,399.7 570.4,404.0 569.3,403.5 C568.1,402.9 565.7,398.2 566.1,396.7Z" fill="#151515" stroke="none" stroke-width="1" stroke-linejoin="round" stroke-linecap="round" />
<path d="M541.6,459.5 C541.2,458.0 541.5,454.5 543.3,453.0 C545.1,451.4 553.0,447.4 554.8,447.9 C556.7,448.4 555.3,454.7 557.0,456.6 C558.7,458.5 566.4,461.1 567.8,462.4 C569.3,463.6 569.2,465.3 567.8,466.0 C566.5,466.6 560.6,467.2 557.7,467.0 C554.8,466.7 548.3,465.1 546.2,464.1 C544.0,463.1 541.9,460.9 541.6,459.5Z" fill="#151515" stroke="none" stroke-width="1" stroke-linejoin="round" stroke-linecap="round" />
<g transform="rotate(10 569.5 428)"><ellipse cx="569.5" cy="428" rx="6.5" ry="24" fill="#3d423e"/><ellipse cx="569.5" cy="428" rx="3.5" ry="15" fill="#6b706a"/></g>
<path d="M463.5,491.5 L500.0,473.5 L555.0,444.5 L555.0,447.5 L500.0,476.5 L463.5,495.0Z" fill="#6a97ee" stroke="none" stroke-width="1" stroke-linejoin="round" stroke-linecap="round" />
<path d="M463.5,496.5 L500.0,477.5 L555.0,448.5" fill="none" stroke="#13204a" stroke-width="1" stroke-linejoin="round" stroke-linecap="round" />
<path d="M370.0,307.4 C373.5,306.9 397.9,306.0 404.9,305.8 C411.8,305.6 433.0,305.3 439.7,305.3 C446.4,305.4 468.3,305.6 472.2,306.3 C476.2,306.9 479.2,310.8 479.2,312.1 C479.2,313.4 476.2,318.6 472.2,319.0 C468.3,319.4 446.4,316.6 439.7,316.0 C433.0,315.4 411.8,313.7 404.9,313.2 C397.9,312.8 373.5,312.0 370.0,311.4 C366.5,310.8 366.5,308.0 370.0,307.4Z" fill="#5a88e4" stroke="none" stroke-width="1" stroke-linejoin="round" stroke-linecap="round" />
<path d="M469.7,315.5 C470.3,312.7 473.9,313.0 475.0,313.2 C476.1,313.4 480.6,315.0 481.1,317.7 C481.5,320.5 480.1,335.6 479.5,340.5 C479.0,345.3 476.3,362.3 475.8,366.2 C475.2,370.2 474.5,377.5 474.2,379.8 C473.9,382.2 473.6,388.9 472.7,389.7 C471.9,390.5 466.4,389.6 465.9,387.4 C465.4,385.2 467.1,372.4 467.4,367.7 C467.7,363.0 468.7,345.7 468.9,340.5 C469.2,335.2 469.1,318.2 469.7,315.5Z" fill="#5a88e4" stroke="none" stroke-width="1" stroke-linejoin="round" stroke-linecap="round" />
<path d="M270.5,371.5 L283.0,360.0 L305.0,342.0 L328.0,324.5 L342.0,315.0 L352.0,315.5 L346.5,318.5 L313.0,341.0 L281.0,367.0 L275.0,374.0Z" fill="#5f8de8" stroke="none" stroke-width="1" stroke-linejoin="round" stroke-linecap="round" />
<path d="M351.1,315.6 L375.6,315.1 L415.6,316.0 L466.7,321.1 L468.9,324.4 L467.8,344.4 L464.4,366.7 L458.9,385.6 L451.1,387.1 L393.3,382.2 L326.7,376.7 L276.0,374.4 L281.0,366.4 L313.6,340.2 L347.6,317.6Z" fill="#9a9b8a" stroke="#14150f" stroke-width="2.2" stroke-linejoin="round" stroke-linecap="round" />
<path d="M276.0,374.4 L278.9,370.2 L311.1,366.7 L357.8,351.1 L364.4,335.6 L375.6,316.7 L383.3,316.7 L381.1,331.1 L388.9,326.7 L404.4,326.7 L408.9,316.7 L418.9,316.7 L415.6,331.1 L433.3,333.3 L444.4,340.0 L465.6,342.2 L463.3,366.7 L458.4,385.1 L451.1,377.8 L437.8,366.7 L415.6,364.4 L384.4,368.9 L360.0,373.3 L353.3,377.1Z" fill="#25251f" stroke="none" stroke-width="1" stroke-linejoin="round" stroke-linecap="round" />
<path d="M431.1,359.6 L448.9,366.7 L455.6,376.7 L453.3,377.8 L446.7,368.9 L430.0,361.8Z" fill="#6e6e64" stroke="none" stroke-width="1" stroke-linejoin="round" stroke-linecap="round" />
<path d="M435.6,356.7 L451.1,363.3 L458.4,373.3 L457.3,375.1 L448.9,365.6 L435.1,358.2Z" fill="#55554d" stroke="none" stroke-width="1" stroke-linejoin="round" stroke-linecap="round" />
<path d="M481.8,320.0 L506.8,314.4 L510.6,322.3 L516.7,338.9 L522.7,358.6 L524.2,367.7 L510.6,370.8 L487.9,369.2 L475.8,367.7 L478.8,343.5Z" fill="#25251f" stroke="#14150f" stroke-width="1.8" stroke-linejoin="round" stroke-linecap="round" />
<path d="M484.1,321.5 L506.8,315.5 L514.4,340.5 L487.9,340.5 L484.5,331.4Z" fill="#a2a392" stroke="none" stroke-width="1" stroke-linejoin="round" stroke-linecap="round" />
<path d="M511.4,313.2 L522.7,313.2 L534.8,320.8 L547.0,332.9 L556.1,343.5 L559.1,352.6 L547.0,360.2 L530.3,364.7Z" fill="#25251f" stroke="#14150f" stroke-width="1.8" stroke-linejoin="round" stroke-linecap="round" />
<path d="M512.4,314.1 L522.7,314.1 L534.8,322.3 L543.9,332.9 L543.2,340.5 L521.2,340.5Z" fill="#a2a392" stroke="none" stroke-width="1" stroke-linejoin="round" stroke-linecap="round" />
<path d="M506.8,313.9 L511.4,313.2 L518.2,329.8 L525.8,352.6 L530.3,364.7 L524.2,367.7 L518.9,346.5 L512.1,325.3Z" fill="#8e8e92" stroke="none" stroke-width="1" stroke-linejoin="round" stroke-linecap="round" />
<path d="M509.4,313.9 L511.4,313.5 L529.5,363.9 L527.6,365.5Z" fill="#b8b8bc" stroke="none" stroke-width="1" stroke-linejoin="round" stroke-linecap="round" />
<path d="M473.4,319.7 C473.1,318.7 476.1,307.1 479.2,305.3 C482.3,303.5 495.2,304.2 500.1,304.4 C505.0,304.6 516.7,305.6 521.0,306.7 C525.3,307.8 533.1,311.0 536.8,313.7 C540.6,316.4 549.6,325.9 553.1,330.0 C556.6,334.0 565.2,345.3 567.0,348.6 C568.9,351.8 569.8,358.6 568.9,357.8 C568.0,357.1 562.0,346.0 559.4,342.3 C556.7,338.6 549.3,329.3 545.9,326.0 C542.5,322.8 534.6,316.1 530.3,314.4 C526.1,312.7 515.1,311.6 509.4,311.6 C503.7,311.6 485.7,313.4 481.5,314.4 C477.3,315.3 473.7,320.8 473.4,319.7Z" fill="#5a88e4" stroke="none" stroke-width="1" stroke-linejoin="round" stroke-linecap="round" />
<path d="M473.4,319.7 C474.7,318.7 475.5,314.8 481.5,313.2 C487.5,311.7 501.3,310.5 509.4,310.4 C517.5,310.4 524.1,310.4 530.3,312.8 C536.5,315.2 541.5,319.9 546.6,324.9 C551.6,329.8 556.7,336.9 560.5,342.3 C564.3,347.7 568.2,353.6 569.3,357.4 C570.5,361.1 567.8,363.6 567.5,364.8" fill="none" stroke="#13204a" stroke-width="0.9" stroke-linejoin="round" stroke-linecap="round" />
<path d="M511.7,376.4 C515.2,374.8 524.5,370.4 532.6,366.7 C540.8,362.9 554.4,355.4 560.5,353.9 C566.6,352.4 567.9,357.2 569.3,357.8" fill="none" stroke="#13204a" stroke-width="0.9" stroke-linejoin="round" stroke-linecap="round" />
<path d="M262.4,359.7 C262.6,358.3 263.0,355.2 264.3,353.9 C265.6,352.5 267.8,352.0 270.1,351.6 C272.4,351.2 276.6,350.8 278.2,351.6 C279.9,352.3 280.1,354.5 279.9,356.2 C279.7,358.0 278.5,360.1 277.1,362.0 C275.6,364.0 273.0,367.3 271.3,367.8 C269.5,368.4 268.0,366.5 266.6,365.5 C265.3,364.5 263.8,363.0 263.1,362.0 C262.4,361.1 262.3,361.1 262.4,359.7Z" fill="#4f80e0" stroke="#13204a" stroke-width="1" stroke-linejoin="round" stroke-linecap="round" />
<path d="M475.0,370.8 C476.7,369.2 483.9,370.3 485.6,371.5 C487.3,372.7 488.1,377.9 487.9,379.8 C487.7,381.8 485.7,384.9 484.1,385.9 C482.5,386.9 477.3,387.8 475.8,387.4 C474.2,387.0 472.8,385.1 472.7,382.9 C472.6,380.7 473.3,372.3 475.0,370.8Z" fill="#3562c0" stroke="#13204a" stroke-width="0.8" stroke-linejoin="round" stroke-linecap="round" />
<path d="M479.5,373.8 L485.6,373.0 L486.4,379.8 L482.6,383.6Z" fill="#101010" stroke="none" stroke-width="1" stroke-linejoin="round" stroke-linecap="round" />
<ellipse cx="498.5" cy="375.5" rx="12.5" ry="7.5" fill="#4f80e0" stroke="#13204a" stroke-width="0.8" transform="rotate(-8 498.5 375.5)"/>
<path d="M269.1,376.4 C265.5,378.5 254.0,384.9 247.3,389.1 C240.6,393.3 234.6,397.2 229.1,401.8 C223.6,406.4 218.6,411.2 214.5,416.4 C210.4,421.5 206.2,430.0 204.5,432.7" fill="none" stroke="#6a97ee" stroke-width="2.2" stroke-linecap="round" stroke-linejoin="round"/>
<path d="M267.3,374.8 C263.7,376.9 252.2,383.0 245.6,387.2 C238.9,391.4 232.9,395.3 227.4,399.8 C221.9,404.3 217.0,409.2 212.8,414.4 C208.6,419.6 204.1,428.4 202.4,431.2" fill="none" stroke="#13204a" stroke-width="1.5" stroke-linecap="round" stroke-linejoin="round"/>
<path d="M454.5,388.2 L409.0,413.6 L382.0,432.0" fill="none" stroke="#13204a" stroke-width="1" stroke-linecap="round" stroke-linejoin="round"/>
<path d="M431.0,389.0 C424.3,391.6 403.8,399.5 391.0,404.5 C378.2,409.5 367.8,412.7 354.5,419.0 C341.2,425.3 318.2,438.6 311.0,442.5" fill="none" stroke="#6a97ee" stroke-width="2.9" stroke-linecap="round" stroke-linejoin="round"/>
<path d="M424.0,389.5 C417.3,392.1 396.7,400.2 384.0,405.2 C371.3,410.2 358.7,414.9 348.0,419.5 C337.3,424.1 324.7,430.8 320.0,433.0" fill="none" stroke="#13204a" stroke-width="0.9" stroke-linecap="round" stroke-linejoin="round"/>
<path d="M480.0,401.0 L445.5,415.5 L409.0,433.6" fill="none" stroke="#13204a" stroke-width="1" stroke-linecap="round" stroke-linejoin="round"/>
<path d="M201.2,432.4 C202.0,433.1 200.6,435.7 206.3,436.7 C212.0,437.7 224.8,437.7 235.3,438.4 C245.8,439.1 258.9,439.9 269.4,440.9 C279.9,442.0 291.6,443.3 298.4,444.7 C305.2,446.1 308.1,448.7 310.0,449.5" fill="none" stroke="#13204a" stroke-width="0.8" opacity="0.45"/>
<path d="M465.0,388.0 C465.7,391.7 467.8,403.0 469.0,410.0 C470.2,417.0 471.4,422.5 472.5,430.0 C473.6,437.5 474.8,446.5 475.5,455.0 C476.2,463.5 476.8,476.7 477.0,481.0" fill="none" stroke="#13204a" stroke-width="1.3" stroke-linecap="round" stroke-linejoin="round"/>
<path d="M531.5,373.0 C532.2,374.7 534.7,378.1 535.8,383.1 C536.9,388.2 537.8,397.1 538.0,403.3 C538.2,409.6 538.0,414.4 537.3,420.6 C536.6,426.9 534.6,436.2 533.6,440.8 C532.6,445.4 531.9,446.8 531.5,448.0" fill="none" stroke="#13204a" stroke-width="1.3" stroke-linecap="round" stroke-linejoin="round"/>
<path d="M455.0,410.5 C458.6,409.1 467.0,405.7 476.6,401.8 C486.2,397.9 501.9,392.0 512.7,387.4 C523.5,382.8 532.5,378.0 541.6,374.4 C550.8,370.8 561.4,367.8 567.6,365.8 C573.8,363.8 577.1,363.1 579.0,362.5" fill="none" stroke="#13204a" stroke-width="1.2" stroke-linecap="round" stroke-linejoin="round"/>
<path d="M477.0,474.0 C480.6,472.3 485.4,469.2 498.3,463.9 C511.2,458.6 545.2,445.9 554.6,442.3" fill="none" stroke="#13204a" stroke-width="0.9" stroke-linecap="round" stroke-linejoin="round"/>
<path d="M463.0,489.0 C469.2,485.8 484.7,478.0 500.0,470.0 C515.3,462.0 545.8,445.8 555.0,441.0" fill="none" stroke="#6a97ee" stroke-width="1.6" stroke-linecap="round" stroke-linejoin="round"/>
<path d="M477.0,447.5 C480.8,445.8 490.0,441.3 500.0,437.0 C510.0,432.7 527.3,425.9 537.0,421.5 C546.7,417.1 554.5,412.3 558.0,410.5" fill="none" stroke="#6a97ee" stroke-width="1.6" stroke-linecap="round" stroke-linejoin="round"/>
<path d="M477.0,449.5 C480.8,447.8 490.0,443.3 500.0,439.0 C510.0,434.7 527.3,427.9 537.0,423.5 C546.7,419.1 554.5,414.3 558.0,412.5" fill="none" stroke="#13204a" stroke-width="0.8" stroke-linecap="round" stroke-linejoin="round"/>
<path d="M528.1,388.8 L533.2,387.0 L533.9,390.2 L528.9,391.9Z" fill="#1b2a5c" stroke="none" stroke-width="1" stroke-linejoin="round" stroke-linecap="round" />
<path d="M464.0,427.6 L469.0,426.6 L469.3,430.4 L464.3,431.4Z" fill="#e8902a" stroke="none" stroke-width="1" stroke-linejoin="round" stroke-linecap="round" />
<path d="M179.9,417.1 C182.1,416.2 187.1,416.2 189.2,417.1 C191.4,417.9 191.9,419.3 192.6,422.2 C193.4,425.0 193.6,430.1 193.5,434.1 C193.4,438.1 192.6,443.2 191.8,446.1 C190.9,448.9 190.5,450.9 188.4,451.2 C186.2,451.5 181.8,449.5 179.0,447.8 C176.2,446.1 172.5,443.5 171.3,440.9 C170.2,438.4 171.5,435.5 172.2,432.4 C172.9,429.3 174.3,424.7 175.6,422.2 C176.9,419.6 177.6,417.9 179.9,417.1Z" fill="#3a3f3d" stroke="#141414" stroke-width="1" stroke-linejoin="round" stroke-linecap="round" />
<path d="M181.6,420.5 L186.7,421.3 L184.1,429.9 L177.3,437.5 L175.6,434.1Z" fill="#7d827e" stroke="none" stroke-width="1" stroke-linejoin="round" stroke-linecap="round" />
<path d="M172.2,436.7 L175.6,438.4 L175.6,443.5 L172.5,441.3Z" fill="#b5b8b2" stroke="none" stroke-width="1" stroke-linejoin="round" stroke-linecap="round" />
<path d="M316.0,462.0 C316.8,460.3 318.5,458.3 321.5,455.7 C324.5,453.0 328.8,448.8 334.1,446.2 C339.3,443.6 346.7,441.6 353.0,439.9 C359.3,438.2 366.1,436.5 371.9,436.0 C377.7,435.5 383.2,435.5 387.6,436.8 C392.1,438.1 396.2,441.2 398.7,443.9 C401.2,446.5 401.9,449.8 402.6,452.5 C403.3,455.3 404.6,458.3 402.6,460.4 C400.6,462.5 396.4,463.9 390.8,465.1 C385.1,466.3 376.4,466.9 368.7,467.5 C361.1,468.1 353.0,468.4 345.1,468.6 C337.2,468.8 326.2,469.0 321.5,468.6 C316.8,468.1 317.7,467.0 316.8,465.9 C315.9,464.8 315.2,463.7 316.0,462.0Z" fill="#3f4441" stroke="#111" stroke-width="1.4" stroke-linejoin="round" stroke-linecap="round" />
<path d="M316.3,463.3 C316.3,462.3 319.3,459.0 320.1,458.8 C320.9,458.6 322.4,460.7 323.1,461.3 C323.8,461.9 323.8,463.7 326.2,464.1 C328.5,464.6 338.6,464.8 343.3,464.8 C348.0,464.8 363.8,463.9 366.6,464.1 C369.3,464.4 370.1,466.7 367.1,467.2 C364.0,467.6 345.8,467.9 340.3,468.0 C334.8,468.1 322.4,468.5 319.6,468.0 C316.8,467.4 316.2,464.4 316.3,463.3Z" fill="#e8e8dc" stroke="none" stroke-width="1" stroke-linejoin="round" stroke-linecap="round" />
<path d="M334.7,448.7 L330.2,454.7 L326.2,460.3" fill="none" stroke="#dcdcd0" stroke-width="2.3" stroke-linecap="round" stroke-linejoin="round"/>
<path d="M326.2,460.3 L340.3,459.3" fill="none" stroke="#dcdcd0" stroke-width="2.3" stroke-linecap="round" stroke-linejoin="round"/>
<path d="M340.3,450.2 L339.3,463.3" fill="none" stroke="#9a9f98" stroke-width="1.2" stroke-linecap="round" stroke-linejoin="round"/>
<ellipse cx="361.0" cy="454.0" rx="7.2" ry="10.2" fill="#5a5f5a" stroke="#e8e8dc" stroke-width="3.2" transform="rotate(12 361.0 454.0)"/>
<ellipse cx="361.0" cy="454.7" rx="3.2" ry="5.2" fill="#2c302d"/>
<ellipse cx="348.9" cy="455.8" rx="3.4" ry="5.6" fill="#8d918a" stroke="#d8d8cc" stroke-width="1.8"/>
<path d="M371.6,444.1 L379.7,442.6 L379.7,460.3 L372.6,462.3Z" fill="#6f746e" stroke="none" stroke-width="1" stroke-linejoin="round" stroke-linecap="round" />
<path d="M370.6,439.6 C372.1,438.7 379.6,436.6 382.7,436.7 C385.8,436.7 391.6,438.5 393.8,439.9 C396.1,441.3 399.0,446.0 399.4,447.2 C399.8,448.3 397.9,449.2 396.9,448.7 C395.9,448.2 393.7,444.7 391.8,443.6 C389.9,442.6 385.4,440.7 382.7,440.6 C380.0,440.5 373.2,443.3 371.6,443.1 C370.0,443.0 369.1,440.5 370.6,439.6Z" fill="#e8e8dc" stroke="none" stroke-width="1" stroke-linejoin="round" stroke-linecap="round" />
<path d="M380.7,450.7 L395.9,451.7 L395.9,454.7 L380.7,454.0Z" fill="#e8e8dc" stroke="none" stroke-width="1" stroke-linejoin="round" stroke-linecap="round" />
<path d="M398.9,448.2 C399.3,448.3 401.9,454.4 402.1,456.3 C402.3,458.2 402.2,461.4 400.4,462.5 C398.6,463.7 390.4,464.9 388.8,464.8 C387.2,464.8 387.2,462.7 388.3,462.1 C389.4,461.5 395.5,461.2 396.9,460.3 C398.3,459.4 398.6,456.9 398.9,455.3 C399.2,453.6 398.5,448.0 398.9,448.2Z" fill="#e8e8dc" stroke="none" stroke-width="1" stroke-linejoin="round" stroke-linecap="round" />
<path d="M204.6,440.9 C206.3,439.8 211.9,439.1 218.2,439.2 C224.6,439.3 243.2,441.0 252.3,441.8 C261.4,442.6 280.5,444.4 286.5,445.2 C292.4,446.0 295.2,446.7 296.7,447.8 C298.2,448.8 298.0,451.3 297.5,452.9 C297.1,454.5 294.8,458.1 293.3,459.7 C291.8,461.3 291.9,464.3 286.5,464.8 C281.0,465.4 260.3,464.6 252.3,464.0 C244.4,463.3 232.2,461.0 226.8,459.7 C221.3,458.5 214.3,456.2 211.4,454.6 C208.6,453.0 206.3,449.6 205.4,447.8 C204.5,445.9 202.9,442.1 204.6,440.9Z" fill="#9c9c98" stroke="#222" stroke-width="0.8" stroke-linejoin="round" stroke-linecap="round" />
<path d="M207.7,443.0 C209.0,442.2 212.3,441.5 218.2,441.6 C224.2,441.8 243.4,443.2 252.3,444.0 C261.3,444.8 280.0,446.6 285.6,447.4 C291.2,448.2 292.9,449.1 294.1,449.8 C295.3,450.5 295.0,451.7 294.6,452.9 C294.3,454.0 292.4,457.1 291.2,458.3 C290.0,459.6 290.8,462.0 285.6,462.4 C280.4,462.9 260.1,462.2 252.3,461.6 C244.6,460.9 232.8,458.6 227.6,457.5 C222.4,456.3 215.7,454.2 213.1,452.9 C210.5,451.6 208.7,449.1 208.0,447.8 C207.3,446.4 206.3,443.8 207.7,443.0Z" fill="#3a3a38" stroke="none" stroke-width="1" stroke-linejoin="round" stroke-linecap="round" />
<path d="M242.1,447.4 L243.8,447.4 L244.8,458.8 L242.8,458.8Z" fill="#a8a8a4" stroke="none" stroke-width="1" stroke-linejoin="round" stroke-linecap="round" />
<path d="M250.6,448.1 L252.7,448.4 L248.9,459.7 L246.9,459.4Z" fill="#a8a8a4" stroke="none" stroke-width="1" stroke-linejoin="round" stroke-linecap="round" />
<path d="M243.5,454.2 L249.8,454.9 L249.4,456.6 L243.6,455.9Z" fill="#8a8a86" stroke="none" stroke-width="1" stroke-linejoin="round" stroke-linecap="round" />
<path d="M154.3,454.2 C156.4,454.4 170.9,459.1 175.6,460.0 C180.3,461.0 193.5,462.6 201.2,463.5 C208.8,464.3 241.5,467.7 252.3,468.6 C263.2,469.5 301.5,472.2 310.0,472.5 C318.5,472.8 329.8,472.0 337.2,471.7 C344.7,471.4 377.1,470.3 384.5,469.5 C391.9,468.7 408.5,464.0 411.3,463.5 C414.0,463.1 414.7,464.6 412.0,465.4 C409.4,466.3 392.0,470.9 384.5,471.7 C377.0,472.6 344.7,473.7 337.2,474.3 C329.8,474.8 318.5,477.2 310.0,477.1 C301.5,477.0 263.2,473.9 252.3,473.0 C241.5,472.1 208.8,468.7 201.2,467.9 C193.5,467.1 180.3,465.7 175.6,464.8 C170.8,463.9 155.9,459.9 153.8,458.8 C151.6,457.8 152.1,454.1 154.3,454.2Z" fill="#6693ec" stroke="none" stroke-width="1" stroke-linejoin="round" stroke-linecap="round" />
<path d="M153.4,456.3 C157.1,457.4 167.6,461.4 175.6,463.1 C183.5,464.8 188.4,465.1 201.2,466.5 C214.0,467.9 234.2,470.2 252.3,471.6 C270.5,473.1 300.4,474.5 310.0,475.1" fill="none" stroke="#13204a" stroke-width="0.8" stroke-linecap="round" stroke-linejoin="round"/>
<path d="M290.0,472.2 C297.9,472.3 321.5,473.3 337.2,473.0 C353.0,472.7 371.9,471.9 384.5,470.6 C397.1,469.3 408.1,466.0 412.8,465.1" fill="none" stroke="#13204a" stroke-width="0.8" stroke-linecap="round" stroke-linejoin="round"/>
<path d="M290.0,469.8 C297.9,470.0 321.5,470.8 337.2,470.6 C353.0,470.4 372.4,469.9 384.5,468.6 C396.6,467.3 405.5,463.7 409.7,462.8" fill="none" stroke="#6a97ee" stroke-width="1.5" stroke-linecap="round" stroke-linejoin="round"/>
<path d="M152.0,458.8 L179.3,466.9 L179.3,471.3 L152.0,464.0Z" fill="#141414" stroke="none" stroke-width="1" stroke-linejoin="round" stroke-linecap="round" />
<path d="M304.2,484.8 C307.4,484.3 330.0,483.5 337.2,483.2 C344.5,482.9 369.6,482.4 376.6,481.7 C383.6,480.9 404.2,476.4 407.3,476.1 C410.5,475.9 411.0,478.2 408.1,479.3 C405.2,480.4 385.3,486.1 378.2,487.2 C371.1,488.2 344.6,489.4 337.2,489.5 C329.9,489.7 308.3,489.2 305.0,488.7 C301.7,488.3 300.9,485.4 304.2,484.8Z" fill="#1a1a18" stroke="none" stroke-width="1" stroke-linejoin="round" stroke-linecap="round" />
<path d="M175.6,483.6 C175.6,482.1 181.2,481.7 184.1,481.9 C187.0,482.0 197.8,484.2 204.6,485.3 C211.4,486.4 241.8,491.3 252.3,493.0 C262.9,494.7 303.1,501.7 310.0,502.3 C316.9,503.0 319.7,499.2 321.5,499.8 C323.3,500.4 327.7,506.5 328.1,508.4 C328.5,510.4 327.2,518.3 325.4,519.4 C323.6,520.6 317.3,520.9 310.0,520.3 C302.7,519.7 262.9,515.0 252.3,513.4 C241.8,511.8 211.4,506.0 204.6,504.4 C197.8,502.7 187.0,499.0 184.1,496.9 C181.2,494.8 175.6,485.1 175.6,483.6Z" fill="#20222a" stroke="#79a2f2" stroke-width="1.2" stroke-linejoin="round" stroke-linecap="round" />
<path d="M184.1,489.0 C187.5,489.6 193.2,490.7 204.6,492.6 C216.0,494.6 234.8,497.9 252.3,500.6 C269.9,503.3 298.3,508.3 310.0,508.8 C321.7,509.4 320.2,504.7 322.3,503.9" fill="none" stroke="#3b62c0" stroke-width="1.5" stroke-linecap="round" stroke-linejoin="round"/>
<path d="M192.6,498.9 C194.6,499.3 194.6,499.6 204.6,501.3 C214.5,503.0 234.8,506.7 252.3,509.2 C269.9,511.6 298.5,515.5 310.0,516.0 C321.5,516.5 319.6,513.0 321.5,512.4" fill="none" stroke="#3b62c0" stroke-width="1.5" stroke-linecap="round" stroke-linejoin="round"/>
<path d="M329.4,519.3 C333.3,519.2 344.8,518.9 353.1,518.5 C361.3,518.0 370.3,517.5 378.9,516.4 C387.5,515.2 400.3,512.4 404.6,511.6" fill="none" stroke="#6a97ee" stroke-width="1.3" stroke-linecap="round" stroke-linejoin="round"/>
<path d="M188.4,510.9 C189.7,510.3 197.2,511.0 201.2,511.7 C205.2,512.4 216.1,515.0 218.2,516.0 C220.4,517.0 219.7,518.9 217.4,519.4 C215.1,519.9 204.7,519.9 201.2,519.4 C197.6,518.9 192.6,517.1 190.9,516.0 C189.2,514.9 187.0,511.4 188.4,510.9Z" fill="#151515" stroke="none" stroke-width="1" stroke-linejoin="round" stroke-linecap="round" />
<path d="M160.2,493.0 C161.8,494.7 164.6,500.6 169.6,503.5 C174.6,506.4 182.0,508.1 190.1,510.4 C198.2,512.6 205.0,515.2 218.2,517.2 C231.4,519.2 254.1,520.9 269.4,522.3 C284.7,523.7 293.2,524.6 310.0,525.7 C326.8,526.8 357.5,528.4 370.0,528.8 C382.5,529.3 380.0,529.3 385.0,528.3 C390.0,527.4 397.4,524.1 399.9,523.3" fill="none" stroke="#0d1f5c" stroke-width="3.2" opacity="0.38" stroke-linecap="round"/>
<path d="M195.2,473.3 L201.2,474.0 L201.2,493.5 L195.2,492.6Z" fill="#2c2ca8" stroke="none" stroke-width="1" stroke-linejoin="round" stroke-linecap="round" />
<path d="M202.9,475.1 L276.2,485.3 L276.2,503.2 L202.9,493.8Z" fill="#f1f1ea" stroke="#333" stroke-width="0.8" stroke-linejoin="round" stroke-linecap="round" />
<text transform="translate(206,492.6) rotate(7.3) scale(0.74,1)" font-family="Liberation Sans, sans-serif" font-size="17.2" textLength="89.5" lengthAdjust="spacing" fill="#1a1a1a">NHN-852</text>
<path d="M351.1,315.6 L375.6,315.1 L415.6,316.0 L466.7,321.1 L468.9,324.4 L467.8,344.4 L464.4,366.7 L458.9,385.6 L451.1,387.1 L393.3,382.2 L326.7,376.7 L276.0,374.4 L281.0,366.4 L313.6,340.2 L347.6,317.6Z" fill="url(#vs)"/>
<path d="M481.8,320.0 L506.8,314.4 L510.6,322.3 L516.7,338.9 L522.7,358.6 L524.2,367.7 L510.6,370.8 L487.9,369.2 L475.8,367.7 L478.8,343.5Z" fill="url(#vs)"/>
<path d="M511.4,313.2 L522.7,313.2 L534.8,320.8 L547.0,332.9 L556.1,343.5 L559.1,352.6 L547.0,360.2 L530.3,364.7Z" fill="url(#vs)"/>
<path d="M207.7,443.0 C209.0,442.2 212.3,441.5 218.2,441.6 C224.2,441.8 243.4,443.2 252.3,444.0 C261.3,444.8 280.0,446.6 285.6,447.4 C291.2,448.2 292.9,449.1 294.1,449.8 C295.3,450.5 295.0,451.7 294.6,452.9 C294.3,454.0 292.4,457.1 291.2,458.3 C290.0,459.6 290.8,462.0 285.6,462.4 C280.4,462.9 260.1,462.2 252.3,461.6 C244.6,460.9 232.8,458.6 227.6,457.5 C222.4,456.3 215.7,454.2 213.1,452.9 C210.5,451.6 208.7,449.1 208.0,447.8 C207.3,446.4 206.3,443.8 207.7,443.0Z" fill="url(#vt)"/>
<path d="M316.0,462.0 C316.8,460.3 318.5,458.3 321.5,455.7 C324.5,453.0 328.8,448.8 334.1,446.2 C339.3,443.6 346.7,441.6 353.0,439.9 C359.3,438.2 366.1,436.5 371.9,436.0 C377.7,435.5 383.2,435.5 387.6,436.8 C392.1,438.1 396.2,441.2 398.7,443.9 C401.2,446.5 401.9,449.8 402.6,452.5 C403.3,455.3 404.6,458.3 402.6,460.4 C400.6,462.5 396.4,463.9 390.8,465.1 C385.1,466.3 376.4,466.9 368.7,467.5 C361.1,468.1 353.0,468.4 345.1,468.6 C337.2,468.8 326.2,469.0 321.5,468.6 C316.8,468.1 317.7,467.0 316.8,465.9 C315.9,464.8 315.2,463.7 316.0,462.0Z" fill="url(#vt)" opacity="0.6"/>
<path d="M179.9,417.1 C182.1,416.2 187.1,416.2 189.2,417.1 C191.4,417.9 191.9,419.3 192.6,422.2 C193.4,425.0 193.6,430.1 193.5,434.1 C193.4,438.1 192.6,443.2 191.8,446.1 C190.9,448.9 190.5,450.9 188.4,451.2 C186.2,451.5 181.8,449.5 179.0,447.8 C176.2,446.1 172.5,443.5 171.3,440.9 C170.2,438.4 171.5,435.5 172.2,432.4 C172.9,429.3 174.3,424.7 175.6,422.2 C176.9,419.6 177.6,417.9 179.9,417.1Z" fill="url(#vt)" opacity="0.8"/>
</svg>
</body></html>
